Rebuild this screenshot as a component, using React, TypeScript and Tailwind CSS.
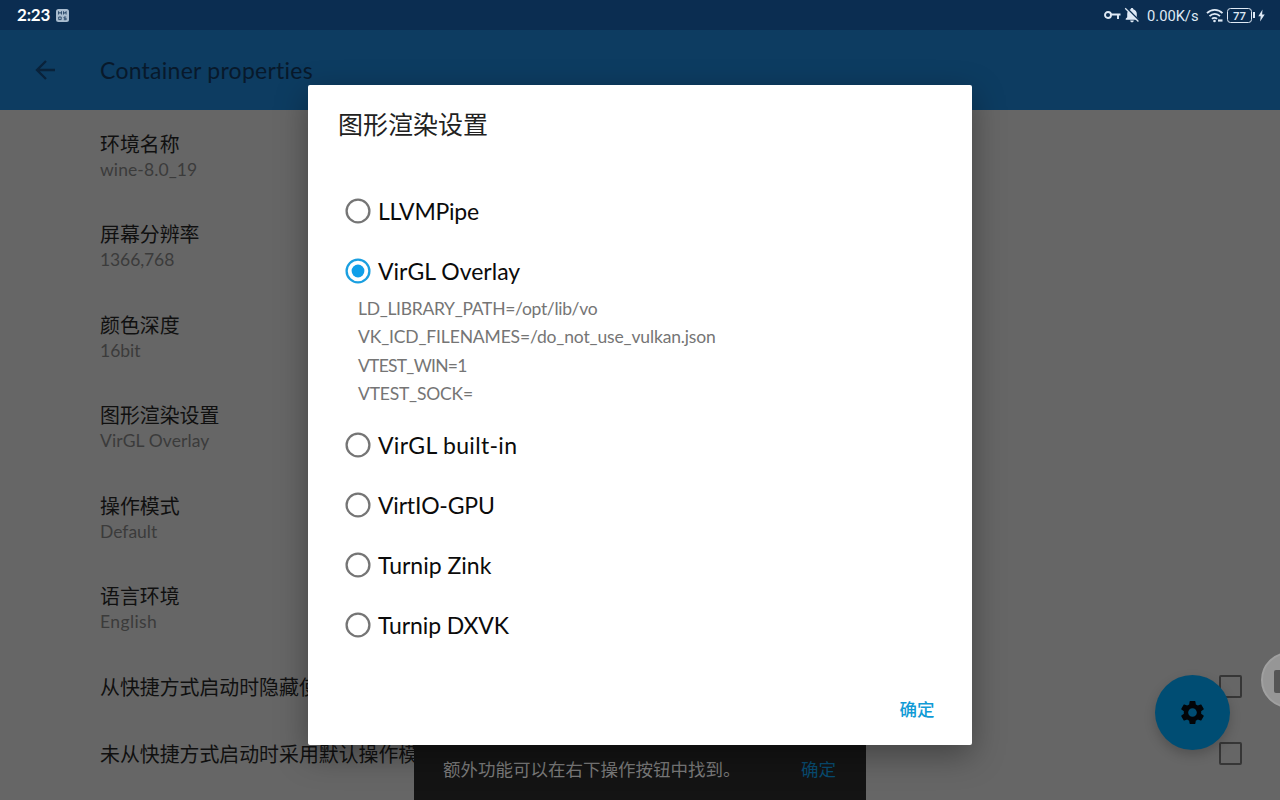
import React from "react";

const uiFont = "font-['Lato','Noto_Sans_CJK_SC',sans-serif] [font-variant-ligatures:none]";

function Preference({ title, value, tracking = "" }: { title: string; value: string; tracking?: string }) {
  return (
    <div className="h-[90.5px] shrink-0">
      <div className="h-[29px] text-[19.9px] leading-[29px] text-[#101010]">{title}</div>
      <div className={"h-[22px] text-[17.5px] leading-[22px] text-[#3b3b3b] " + tracking}>{value}</div>
    </div>
  );
}

function SwitchRow({ title }: { title: string }) {
  return (
    <div className="flex h-[67px] shrink-0 items-center justify-between pr-[38px]">
      <span className="whitespace-nowrap pt-[3px] text-[19.9px] text-[#101010]">{title}</span>
      <span className="h-[23px] w-[23px] rounded-[2px] border-2 border-[#363636]" />
    </div>
  );
}

function Radio({ label, checked = false, tracking = "" }: { label: string; checked?: boolean; tracking?: string }) {
  return (
    <div className="flex h-[60px] shrink-0 items-center gap-[7px] pl-[37px]">
      <svg width="26" height="26" viewBox="0 0 26 26" fill="none">
        <circle cx="13" cy="13" r="11.4" stroke={checked ? "#1a9fe0" : "#757575"} strokeWidth="2.3" />
        {checked && <circle cx="13" cy="13" r="6.4" fill="#0f9fe9" />}
      </svg>
      <span className={"whitespace-nowrap text-[23px] leading-[30px] text-[#0b0b0b] " + tracking}>{label}</span>
    </div>
  );
}

function StatusBar() {
  return (
    <div className="flex h-[30px] shrink-0 items-center justify-between bg-[#0b2d51] pl-[17px] pr-[15px] text-[#dfe9f5]">
      <div className="flex items-center gap-[6px]">
        <span className="text-[17px] font-bold leading-[30px] tracking-[-0.2px] text-white">2:23</span>
        <svg width="13" height="13" viewBox="0 0 13 13">
          <rect width="13" height="13" rx="2.5" fill="#a9bccf" />
          <path d="M2.5 5.5v-3l1.5 2 1.5-2v3M7.5 5.5v-3l1.3 2 1.3-2v3M2.7 8h2.5v2.6H2.7zM10.2 8H8v1.3h2.2v1.4H7.8" fill="none" stroke="#264566" strokeWidth=".9" />
        </svg>
      </div>
      <div className="flex items-center">
        <svg width="18" height="10" viewBox="0 0 18 10" fill="none" stroke="currentColor" strokeWidth="1.9">
          <circle cx="4" cy="5" r="3" />
          <path d="M7 4.500h9.500M14 4.500v4.500" />
        </svg>
        <svg className="ml-[2px]" width="16" height="16" viewBox="0 0 16 16">
          <path d="M8 1c.8 0 1.300.6 1.300 1.200 2.200.7 3.500 2.300 3.500 4.600v3.400l1.500 1.600v.9H1.700v-.9l1.500-1.600V6.800c0-2.300 1.300-3.900 3.500-4.600C6.700 1.600 7.200 1 8 1zM6.200 13.400h3.600c0 1-.8 1.800-1.800 1.800s-1.800-.8-1.800-1.800z" fill="currentColor" />
          <path d="M2.600.9l12.800 13" stroke="#0b2d51" strokeWidth="1.500" />
          <path d="M1.200 1.300l13.200 13.200" stroke="currentColor" strokeWidth="1.300" />
        </svg>
        <span className="ml-[7px] w-[52px] whitespace-nowrap pt-px font-['Roboto',sans-serif] text-[14.7px] leading-[30px]">0.00K/s</span>
        <svg className="ml-[7px]" width="18" height="15" viewBox="0 0 18 15" fill="none" stroke="currentColor" strokeWidth="1.800">
          <path d="M1 5.200C5.300.7 12.200.7 16.500 5.200M3.500 8.100c3-3 7.500-3 10.500 0M6 10.900c1.400-1.500 3.600-1.500 5 0" />
          <circle cx="8.500" cy="13" r="1.300" fill="currentColor" stroke="none" />
          <path d="M12 12.500h4.500" strokeWidth="2.200" />
        </svg>
        <span className="ml-[3px] flex h-[15px] w-[25px] items-center justify-center rounded-[3.5px] border-[1.500px] border-current text-[11px] font-bold leading-none">77</span>
        <span className="ml-[1px] h-[6px] w-[2px] bg-current" />
        <svg className="ml-[3px]" width="7" height="13" viewBox="0 0 7 12" fill="currentColor">
          <path d="M4.500 0L.3 6.800h2.400L2.100 12 6.700 5H4.100z" />
        </svg>
      </div>
    </div>
  );
}

export default function App() {
  return (
    <div className={"relative flex h-[800px] w-[1280px] flex-col overflow-hidden bg-[#666666] " + uiFont}>
      <StatusBar />
      <header className="flex h-[80px] shrink-0 items-center bg-[#0d3c61] pl-[35px]">
        <svg width="21" height="20" viewBox="0 0 21 20" fill="none" stroke="#09223a" strokeWidth="2.300">
          <path d="M20 10H2.500M11 1L2 10l9 9" />
        </svg>
        <h1 className="ml-[44px] whitespace-nowrap text-[23px] tracking-[0.25px] text-[#08192b]">Container properties</h1>
      </header>
      <main className="flex min-h-0 flex-1 flex-col pl-[100px] pt-[19.500px]">
        <Preference title="环境名称" value="wine-8.0_19" tracking="tracking-[0.1px]" />
        <Preference title="屏幕分辨率" value="1366,768" tracking="tracking-[-0.1px]" />
        <Preference title="颜色深度" value="16bit" />
        <Preference title="图形渲染设置" value="VirGL Overlay" tracking="tracking-[0.1px]" />
        <Preference title="操作模式" value="Default" />
        <Preference title="语言环境" value="English" tracking="tracking-[0.4px]" />
        <div className="-mt-[20px] flex flex-col">
          <SwitchRow title="从快捷方式启动时隐藏使用提示" />
          <SwitchRow title="未从快捷方式启动时采用默认操作模式" />
        </div>
      </main>

      <button className="absolute left-[1155px] top-[675px] flex h-[75px] w-[75px] items-center justify-center rounded-full bg-[#004d73] shadow-[0_5px_12px_rgba(0,0,0,0.2)]">
        <svg width="29" height="29" viewBox="0 0 24 24">
          <path fill="#020508" d="M19.140 12.940c.04-.3.060-.61.060-.94 0-.32-.02-.64-.07-.94l2.030-1.580c.18-.14.230-.41.120-.61l-1.920-3.320c-.12-.22-.37-.29-.59-.22l-2.390.96c-.5-.38-1.030-.7-1.620-.94l-.36-2.540c-.04-.24-.24-.41-.48-.41h-3.840c-.24 0-.43.17-.47.41l-.36 2.540c-.59.24-1.130.57-1.620.94l-2.390-.96c-.22-.08-.47 0-.59.22L2.740 8.870c-.12.21-.08.47.12.610l2.030 1.580c-.05.3-.09.630-.09.940s.02.640.070.940l-2.030 1.580c-.18.140-.23.410-.12.610l1.920 3.320c.12.220.37.290.59.220l2.390-.96c.5.380 1.030.7 1.620.940l.36 2.540c.05.240.24.410.48.410h3.840c.24 0 .44-.17.470-.41l.36-2.540c.59-.24 1.130-.56 1.620-.94l2.390.96c.22.080.47 0 .59-.22l1.920-3.320c.12-.22.070-.47-.12-.61l-2.010-1.580zM12 15.600c-1.980 0-3.600-1.620-3.600-3.600s1.620-3.600 3.600-3.600 3.600 1.620 3.600 3.600-1.620 3.600-3.600 3.600z" />
        </svg>
      </button>
      <div className="absolute left-[1261px] top-[652px] flex h-[56px] w-[56px] items-center rounded-full border-2 border-[#a0a0a0] bg-[#969696] pl-[11px] pt-[3px]">
        <span className="h-[23px] w-[24px] rounded-[2px] bg-[#555]" />
      </div>

      <div className="absolute left-[414px] top-[730px] flex h-[72px] w-[452px] items-center justify-between bg-[#141414] pl-[29px] pr-[30px] pt-[9px] text-[17.500px]">
        <span className="whitespace-nowrap text-[#7b7b7b]">额外功能可以在右下操作按钮中找到。</span>
        <span className="text-[#084c71]">确定</span>
      </div>

      <section className="absolute left-[308px] top-[85px] flex h-[660px] w-[664px] flex-col rounded-[2px] bg-white shadow-[0_10px_32px_rgba(0,0,0,0.35)]">
        <h2 className="h-[96px] shrink-0 pl-[30px] pt-[20px] text-[25px] leading-[38px] text-[#212121]">图形渲染设置</h2>
        <Radio label="LLVMPipe" tracking="tracking-[-0.25px]" />
        <Radio label="VirGL Overlay" checked />
        <div className="-mt-[6.500px] mb-[6.500px] flex h-[114px] shrink-0 flex-col whitespace-nowrap pl-[50px] text-[17.500px] leading-[28.500px] text-[#757575]">
          <span className="tracking-[-0.3px]">LD_LIBRARY_PATH=/opt/lib/vo</span>
          <span className="tracking-[-0.15px]">VK_ICD_FILENAMES=/do_not_use_vulkan.json</span>
          <span className="tracking-[-0.75px]">VTEST_WIN=1</span>
          <span className="tracking-[-0.2px]">VTEST_SOCK=</span>
        </div>
        <Radio label="VirGL built-in" tracking="tracking-[0.3px]" />
        <Radio label="VirtIO-GPU" tracking="tracking-[-0.2px]" />
        <Radio label="Turnip Zink" />
        <Radio label="Turnip DXVK" tracking="tracking-[-0.1px]" />
        <button className="ml-auto mr-[37.500px] mt-[40px] text-[17.500px] font-medium leading-[30px] text-[#109bd6]">确定</button>
      </section>
    </div>
  );
}
